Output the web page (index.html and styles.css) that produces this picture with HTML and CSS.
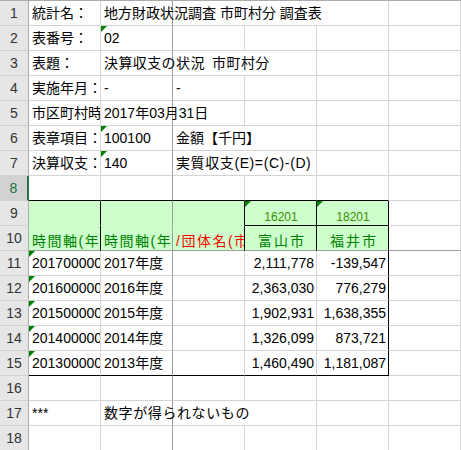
FILE: index.html
```html
<!DOCTYPE html>
<html lang="ja">
<head>
<meta charset="utf-8">
<title>地方財政状況調査</title>
<link rel="stylesheet" href="styles.css">
</head>
<body>
<div class="sheet">
  <div class="row">
    <div class="rh">1</div>
    <div class="c clip">統計名：</div>
    <div class="c">地方財政状況調査 市町村分 調査表</div>
    <div class="c nr"></div>
    <div class="c nr"></div>
    <div class="c"></div>
    <div class="c"></div>
  </div>
  <div class="row">
    <div class="rh">2</div>
    <div class="c clip">表番号：</div>
    <div class="c tri">02</div>
    <div class="c"></div>
    <div class="c"></div>
    <div class="c"></div>
    <div class="c"></div>
  </div>
  <div class="row">
    <div class="rh">3</div>
    <div class="c clip">表題：</div>
    <div class="c title">決算収支の状況 市町村分</div>
    <div class="c nr"></div>
    <div class="c"></div>
    <div class="c"></div>
    <div class="c"></div>
  </div>
  <div class="row">
    <div class="rh">4</div>
    <div class="c clip">実施年月：</div>
    <div class="c">-</div>
    <div class="c">-</div>
    <div class="c"></div>
    <div class="c"></div>
    <div class="c"></div>
  </div>
  <div class="row">
    <div class="rh">5</div>
    <div class="c clip">市区町村時点：</div>
    <div class="c">2017年03月31日</div>
    <div class="c"></div>
    <div class="c"></div>
    <div class="c"></div>
    <div class="c"></div>
  </div>
  <div class="row">
    <div class="rh">6</div>
    <div class="c clip">表章項目：</div>
    <div class="c tri">100100</div>
    <div class="c nr">金額【千円】</div>
    <div class="c"></div>
    <div class="c"></div>
    <div class="c"></div>
  </div>
  <div class="row">
    <div class="rh">7</div>
    <div class="c clip">決算収支：</div>
    <div class="c tri">140</div>
    <div class="c nr wide">実質収支(E)=(C)-(D)</div>
    <div class="c"></div>
    <div class="c"></div>
    <div class="c"></div>
  </div>
  <div class="row">
    <div class="rh sel">8</div>
    <div class="c bb"></div>
    <div class="c bb"></div>
    <div class="c bb"></div>
    <div class="c bb"></div>
    <div class="c bb"></div>
    <div class="c"></div>
  </div>
  <div class="row r9">
    <div class="rh">9</div>
    <div class="c hd nb br"></div>
    <div class="c hd nb"></div>
    <div class="c hd nb br"></div>
    <div class="c hd code tri br bb">16201</div>
    <div class="c hd code tri br bb">18201</div>
    <div class="c"></div>
  </div>
  <div class="row r10">
    <div class="rh">10</div>
    <div class="c hd clip gr sp br">時間軸(年度コード)</div>
    <div class="c hd clip gr sp">時間軸(年度)</div>
    <div class="c hd clip red sp br">/団体名(市町村)</div>
    <div class="c hd gr city br">富山市</div>
    <div class="c hd gr city br">福井市</div>
    <div class="c"></div>
  </div>
  <div class="row">
    <div class="rh">11</div>
    <div class="c clip tri">2017000000</div>
    <div class="c">2017年度</div>
    <div class="c"></div>
    <div class="c num">2,111,778</div>
    <div class="c num br">-139,547</div>
    <div class="c"></div>
  </div>
  <div class="row">
    <div class="rh">12</div>
    <div class="c clip tri">2016000000</div>
    <div class="c">2016年度</div>
    <div class="c"></div>
    <div class="c num">2,363,030</div>
    <div class="c num br">776,279</div>
    <div class="c"></div>
  </div>
  <div class="row">
    <div class="rh">13</div>
    <div class="c clip tri">2015000000</div>
    <div class="c">2015年度</div>
    <div class="c"></div>
    <div class="c num">1,902,931</div>
    <div class="c num br">1,638,355</div>
    <div class="c"></div>
  </div>
  <div class="row">
    <div class="rh">14</div>
    <div class="c clip tri">2014000000</div>
    <div class="c">2014年度</div>
    <div class="c"></div>
    <div class="c num">1,326,099</div>
    <div class="c num br">873,721</div>
    <div class="c"></div>
  </div>
  <div class="row">
    <div class="rh">15</div>
    <div class="c clip tri bb">2013000000</div>
    <div class="c bb">2013年度</div>
    <div class="c bb"></div>
    <div class="c num bb">1,460,490</div>
    <div class="c num br bb">1,181,087</div>
    <div class="c"></div>
  </div>
  <div class="row">
    <div class="rh">16</div>
    <div class="c"></div>
    <div class="c"></div>
    <div class="c"></div>
    <div class="c"></div>
    <div class="c"></div>
    <div class="c"></div>
  </div>
  <div class="row">
    <div class="rh">17</div>
    <div class="c">***</div>
    <div class="c wide">数字が得られないもの</div>
    <div class="c nr"></div>
    <div class="c"></div>
    <div class="c"></div>
    <div class="c"></div>
  </div>
  <div class="row">
    <div class="rh">18</div>
    <div class="c"></div>
    <div class="c"></div>
    <div class="c"></div>
    <div class="c"></div>
    <div class="c"></div>
    <div class="c"></div>
  </div>
</div>
</body>
</html>
```

FILE: styles.css
```css
html, body {
  margin: 0;
  padding: 0;
  background: #ffffff;
}

body {
  font-family: "Liberation Sans", "Noto Sans CJK JP", sans-serif;
  font-size: 14px;
  color: #000000;
  overflow: hidden;
}

.sheet {
  width: 461px;
  border-top: 1px solid #ababab;
}

.row {
  display: grid;
  grid-template-columns: 29px repeat(6, 72px);
  height: 25px;
}

.rh {
  box-sizing: border-box;
  height: 25px;
  background: #e6e6e6;
  border-right: 1px solid #ababab;
  border-bottom: 1px solid #cfcfcf;
  color: #333333;
  text-align: center;
  line-height: 24px;
  font-size: 14px;
}

.rh.sel {
  background: #d2d2d2;
  color: #217346;
  border-right: 2px solid #217346;
}

.c {
  box-sizing: border-box;
  height: 25px;
  min-width: 0;
  position: relative;
  padding: 1px 2px 0 3px;
  line-height: 23px;
  white-space: nowrap;
  border-right: 1px solid #d4d4d4;
  border-bottom: 1px solid #d4d4d4;
}

/* frozen pane vertical line after column B */
.row > .c:nth-child(3) {
  border-right-color: #9e9e9e;
}

/* frozen pane horizontal line under row 10 */
.r10 > .c {
  border-bottom-color: #9e9e9e;
}

.clip {
  overflow: hidden;
}

.nr {
  border-right-color: transparent;
}

.nb {
  border-bottom-color: transparent;
}

.br {
  border-right-color: #000000;
}

.bb {
  border-bottom-color: #000000;
}

.row > .c.br:nth-child(3) {
  border-right-color: #9e9e9e;
}

.tri::before {
  content: "";
  position: absolute;
  left: 0;
  top: 0;
  width: 0;
  height: 0;
  border-top: 6px solid #008000;
  border-right: 6px solid transparent;
}

.num {
  text-align: right;
}

.wide {
  letter-spacing: 0.6px;
}

.title {
  letter-spacing: 0.4px;
  word-spacing: 3px;
}

.hd {
  background: #ccffcc;
}

.r9 .c {
  padding-top: 8px;
  line-height: 16px;
}

.code {
  font-size: 12px;
  text-align: center;
  color: #3c8c00;
}

.r10 .c {
  padding-top: 7px;
  line-height: 17px;
}

.gr {
  color: #008000;
}

.red {
  color: #ff0000;
}

.sp {
  letter-spacing: 1.5px;
}

.city {
  text-align: center;
  letter-spacing: 2px;
  padding-left: 5px;
}
```
